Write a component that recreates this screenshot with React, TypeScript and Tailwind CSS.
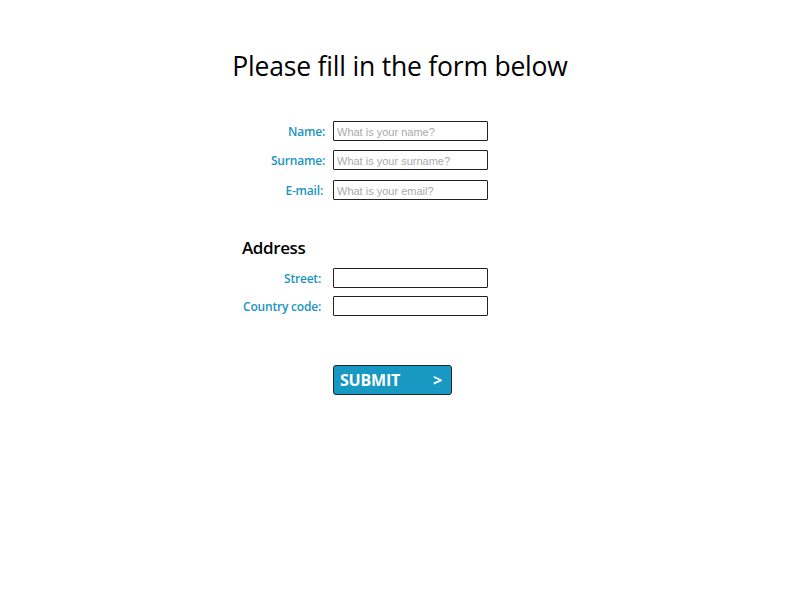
export default function App() {
    const rowLabel = "w-[91px] pr-[8px] pt-[1px] text-right whitespace-nowrap text-[12px] tracking-[-0.2px] font-semibold text-[#1995c0]";
    const addrLabel = "w-[91px] pr-[12px] pt-[1px] text-right whitespace-nowrap text-[12px] tracking-[-0.2px] font-semibold text-[#1995c0]";
    const inputCls =
        "w-[155px] h-[20px] border border-[#222] rounded-[1px] px-[3px] pt-[1px] text-[11px] text-black placeholder:text-[#a9a9a9] outline-none bg-white font-['Liberation_Sans',sans-serif]";

    return (
        <div className="w-[800px] h-[600px] bg-white font-['Open_Sans',sans-serif]">
            <h1 className="pt-[46px] text-center text-[26.5px] tracking-[-0.2px] leading-[40px] text-black">
                Please fill in the form below
            </h1>

            <div className="ml-[242px] mt-[35px] flex flex-col">
                <div className="flex items-center h-[20px]">
                    <label className={rowLabel}>Name:</label>
                    <input className={inputCls} placeholder="What is your name?" />
                </div>
                <div className="flex items-center h-[20px] mt-[9px]">
                    <label className={rowLabel}>Surname:</label>
                    <input className={inputCls} placeholder="What is your surname?" />
                </div>
                <div className="flex items-center h-[20px] mt-[10px]">
                    <label className={rowLabel + " pr-[10px]"}>E-mail:</label>
                    <input className={inputCls} placeholder="What is your email?" />
                </div>

                <h2 className="mt-[36px] text-[17px] tracking-[-0.4px] leading-[24px] font-semibold text-black">Address</h2>

                <div className="flex items-center h-[20px] mt-[8px]">
                    <label className={addrLabel}>Street:</label>
                    <input className={inputCls} />
                </div>
                <div className="flex items-center h-[20px] mt-[8px]">
                    <label className={addrLabel}>Country code:</label>
                    <input className={inputCls} />
                </div>

                <div className="ml-[91px] mt-[49px]">
                    <button
                        type="button"
                        className="w-[119px] h-[30px] flex items-center justify-between pl-[6px] pr-[9px] bg-[#1799c4] border border-[#1a2a33] rounded-[3px] text-white font-bold text-[16px] tracking-[-0.2px]"
                    >
                        <span>SUBMIT</span>
                        <span>&gt;</span>
                    </button>
                </div>
            </div>
        </div>
    );
}
